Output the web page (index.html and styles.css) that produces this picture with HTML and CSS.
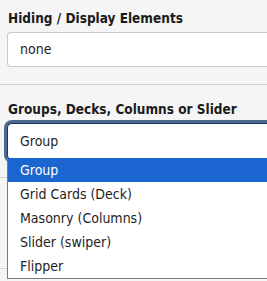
FILE: index.html
```html
<!DOCTYPE html>
<html lang="en">
<head>
    <meta charset="UTF-8">
    <title>Element settings</title>
    <link rel="stylesheet" href="styles.css">
</head>
<body>

<div class="form">
    <div class="field">
        <label class="field-label">Hiding / Display Elements</label>
        <div class="input-box">none</div>
    </div>

    <div class="field">
        <label class="field-label">Groups, Decks, Columns or Slider</label>
        <div class="input-box select-box focused">Group</div>
        <ul class="dropdown">
            <li class="selected">Group</li>
            <li>Grid Cards (Deck)</li>
            <li>Masonry (Columns)</li>
            <li>Slider (swiper)</li>
            <li>Flipper</li>
        </ul>
    </div>

    <div class="field">
        <label class="field-label">&nbsp;</label>
        <div class="input-box">&nbsp;</div>
    </div>
</div>

</body>
</html>
```

FILE: styles.css
```css
body {
    margin: 0;
    min-height: 100vh;
    background-color: #f5f5f5;
    font-family: "DejaVu Sans Condensed", "DejaVu Sans", sans-serif;
    font-stretch: condensed;
    font-size: 14px;
    color: #1e1e1e;
}
.form {
    margin-top: -6px;
}
.field {
    position: relative;
    padding: 15px 0 17px 7px;
    border-bottom: 1px solid #d3d3d3;
}
.field-label {
    display: block;
    height: 18px;
    line-height: 18px;
    margin: 0 0 5px 1px;
    font-size: 13.5px;
    font-weight: bold;
    color: #1b1b1b;
    white-space: nowrap;
}
.input-box {
    box-sizing: border-box;
    height: 35px;
    line-height: 33px;
    padding-left: 12px;
    background: #fff;
    border: 1px solid #c9c9c9;
    border-right: none;
    border-radius: 4px 0 0 4px;
}
.select-box.focused {
    height: 37px;
    line-height: 35px;
    border-color: #1c355c;
    box-shadow: 0 0 0 3px #4e6990;
    border-radius: 5px 0 0 5px;
}
.dropdown {
    position: absolute;
    left: 7px;
    right: 0;
    top: 73px;
    margin: 0;
    padding: 0;
    list-style: none;
    background: #fff;
    border: 1px solid #7a7a7a;
    border-top: none;
    border-right: none;
    z-index: 2;
}
.dropdown li {
    height: 24px;
    line-height: 25px;
    padding-left: 12px;
    white-space: nowrap;
}
.dropdown li.selected {
    background: #1b65d1;
    color: #fff;
}
```
